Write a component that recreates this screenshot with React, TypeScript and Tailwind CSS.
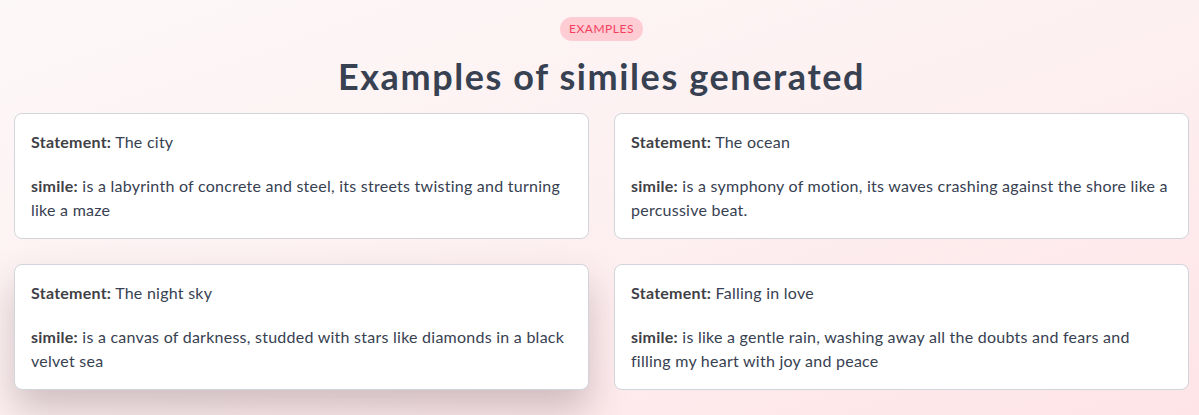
import React from "react";

const examples = [
  {
    statement: "The city",
    simile: "is a labyrinth of concrete and steel, its streets twisting and turning like a maze",
  },
  {
    statement: "The ocean",
    simile: "is a symphony of motion, its waves crashing against the shore like a percussive beat.",
  },
  {
    statement: "The night sky",
    simile: "is a canvas of darkness, studded with stars like diamonds in a black velvet sea",
    hover: true,
  },
  {
    statement: "Falling in love",
    simile: "is like a gentle rain, washing away all the doubts and fears and filling my heart with joy and peace",
  },
];

export default function App() {
  return (
    <div
      className="min-h-[415px] bg-gradient-to-br from-[#fdf8f8] via-[#fdf0f1] to-[#fee4e7] pt-[17px] pb-6 pl-[14px] pr-[10px] text-[#374151]"
      style={{ fontFamily: "Lato, 'Noto Sans', sans-serif" }}
    >
      <div className="flex justify-center">
        <span className="rounded-full bg-[#fecdd3] px-[9px] h-6 flex items-center text-[12px] tracking-[0.5px] text-[#f43f5e]">
          EXAMPLES
        </span>
      </div>
      <h2 className="mt-[13px] text-center text-[36px] leading-[44px] font-bold text-[#374151] tracking-[1.6px]">
        Examples of similes generated
      </h2>
      <div className="mt-[15px] grid grid-cols-2 gap-x-[25px] gap-y-[25px]">
        {examples.map((ex) => (
          <div
            key={ex.statement}
            className={
              "rounded-lg border border-[#d1d5db] bg-white p-4 text-[16px] leading-6 tracking-[0.25px] " +
              (ex.hover ? "shadow-[0_20px_36px_rgba(80,55,60,0.26)]" : "")
            }
          >
            <p>
              <span className="font-bold text-[#3f3f46]">Statement:</span>
              <span> {ex.statement}</span>
            </p>
            <p className="mt-5">
              <span className="font-bold text-[#3f3f46]">simile:</span>
              <span> {ex.simile}</span>
            </p>
          </div>
        ))}
      </div>
    </div>
  );
}
